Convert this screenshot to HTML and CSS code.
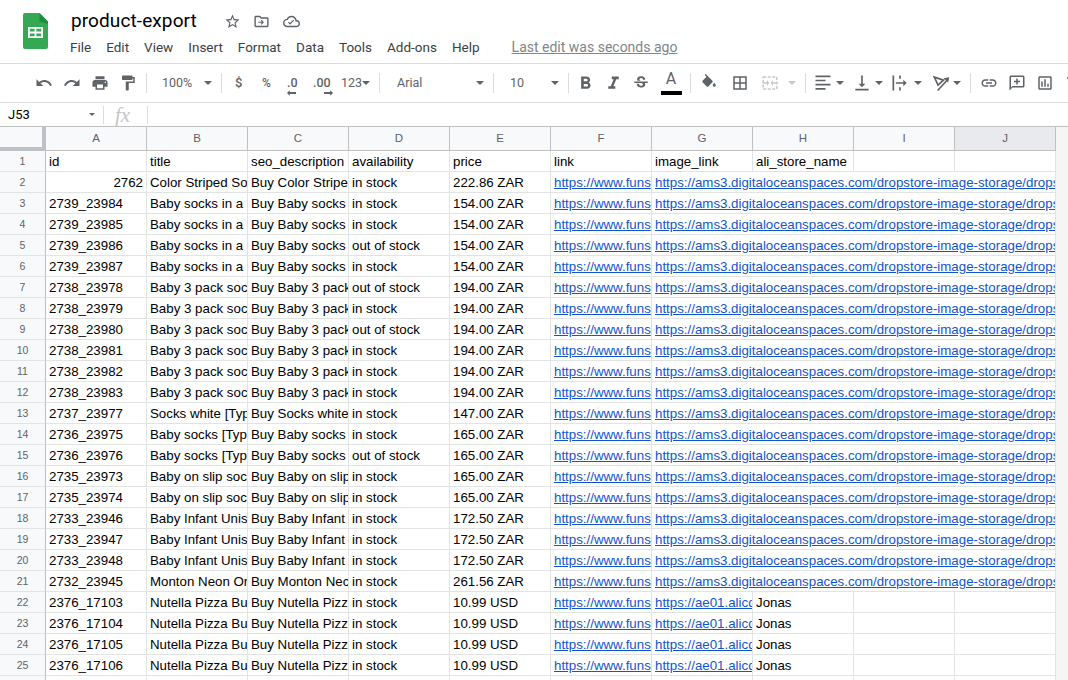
FILE: index.html
```html
<!DOCTYPE html>
<html lang="en">
<head>
<meta charset="utf-8">
<title>product-export</title>
<link rel="stylesheet" href="styles.css">
</head>
<body>
<header class="top">
  <svg class="logo" viewBox="0 0 25 36"><path fill="#34a853" d="M2 0h14.500L25 8.500V34a2 2 0 0 1-2 2H2a2 2 0 0 1-2-2V2a2 2 0 0 1 2-2z"/><path fill="#188038" d="M16.500 0L25 8.500V11l-8.500-2.500z" opacity=".7"/><path fill="#fff" d="M5 14h15v11H5zm1.800 1.800v2.800h4.800v-2.800zm6.600 0v2.800h4.800v-2.800zM6.800 20.400v2.800h4.800v-2.800zm6.600 0v2.800h4.800v-2.800z" fill-rule="evenodd"/></svg>
  <div class="titles">
    <div class="titleline">
      <span class="doc">product-export</span>
      <svg class="hi star" viewBox="0 0 24 24"><path d="M22 9.240l-7.190-.62L12 2 9.190 8.630 2 9.240l5.460 4.730L5.820 21 12 17.270 18.180 21l-1.630-7.030L22 9.240zM12 15.400l-3.760 2.270 1-4.280-3.320-2.880 4.380-.38L12 6.100l1.710 4.040 4.380.38-3.320 2.880 1 4.280L12 15.400z"/></svg>
      <svg class="hi" viewBox="0 0 24 24"><path d="M20 6h-8l-2-2H4c-1.100 0-2 .9-2 2v12c0 1.100.9 2 2 2h16c1.100 0 2-.9 2-2V8c0-1.100-.9-2-2-2zm0 12H4V6h5.200l2 2H20v10zM12 9.500l-1.100 1.100 1.600 1.600H7.500v1.600h5l-1.600 1.600 1.100 1.100 3.500-3.500z"/></svg>
      <svg class="hi" viewBox="0 0 24 24"><path d="M19.350 10.040C18.670 6.590 15.640 4 12 4 9.110 4 6.600 5.640 5.350 8.040 2.340 8.360 0 10.910 0 14c0 3.310 2.690 6 6 6h13c2.760 0 5-2.240 5-5 0-2.640-2.050-4.780-4.650-4.960zM19 18H6c-2.210 0-4-1.790-4-4s1.790-4 4-4h.71C7.370 7.690 9.480 6 12 6c3.040 0 5.500 2.460 5.500 5.500v.5H19c1.660 0 3 1.340 3 3s-1.340 3-3 3zm-9-1.500l-3-3 1.200-1.200 1.800 1.800 4.600-4.600 1.200 1.200z"/></svg>
    </div>
    <nav class="menu">
      <span>File</span><span>Edit</span><span>View</span><span>Insert</span><span>Format</span><span>Data</span><span>Tools</span><span>Add-ons</span><span>Help</span>
      <span class="last">Last edit was seconds ago</span>
    </nav>
  </div>
</header>

<div class="toolbar">
  <span class="tb"><svg class="ic" viewBox="0 0 24 24"><path d="M12.500 8c-2.650 0-5.050.99-6.900 2.600L2 7v9h9l-3.620-3.620c1.390-1.160 3.160-1.880 5.120-1.880 3.540 0 6.550 2.310 7.600 5.500l2.370-.78C21.080 11.030 17.150 8 12.500 8z"/></svg></span>
  <span class="tb"><svg class="ic" viewBox="0 0 24 24"><path d="M18.400 10.600C16.550 8.990 14.150 8 11.500 8c-4.650 0-8.580 3.030-9.960 7.220L3.900 16c1.050-3.190 4.050-5.500 7.600-5.500 1.950 0 3.730.72 5.120 1.880L13 16h9V7l-3.600 3.600z"/></svg></span>
  <span class="tb"><svg class="ic" viewBox="0 0 24 24"><path d="M19 8H5c-1.660 0-3 1.340-3 3v6h4v4h12v-4h4v-6c0-1.660-1.340-3-3-3zm-3 11H8v-5h8v5zm3-7c-.55 0-1-.45-1-1s.45-1 1-1 1 .45 1 1-.45 1-1 1zm-1-9H6v4h12V3z"/></svg></span>
  <span class="tb"><svg class="ic" viewBox="0 0 24 24"><path d="M18 4V3c0-.55-.45-1-1-1H5c-.55 0-1 .45-1 1v4c0 .55.45 1 1 1h12c.55 0 1-.45 1-1V6h1v4H9v11c0 .55.45 1 1 1h2c.55 0 1-.45 1-1v-9h8V4h-3z"/></svg></span>
  <i class="sep s1"></i>
  <span class="tt zoom">100%</span><i class="caret c-zoom"></i>
  <i class="sep s9"></i>
  <span class="tt dollar">$</span>
  <span class="tt pct">%</span>
  <span class="tt dec dec0">.0<svg class="arr" viewBox="0 0 10 6"><path d="M0 3l3-3v2h7v2H3v2z"/></svg></span>
  <span class="tt dec dec00">.00<svg class="arr" viewBox="0 0 10 6"><path d="M10 3L7 0v2H0v2h7v2z"/></svg></span>
  <span class="tt n123">123</span><i class="caret c-123"></i>
  <i class="sep s9"></i>
  <span class="tt font">Arial</span><i class="caret"></i>
  <i class="sep s9"></i>
  <span class="tt size">10</span><i class="caret"></i>
  <i class="sep s9"></i>
  <span class="tb big m2"><svg class="ic" viewBox="0 0 24 24"><path d="M15.600 10.790c.97-.67 1.650-1.770 1.650-2.790 0-2.260-1.750-4-4-4H7v14h7.040c2.090 0 3.710-1.700 3.710-3.790 0-1.520-.86-2.820-2.150-3.420zM10 6.500h3c.83 0 1.500.67 1.500 1.500s-.67 1.500-1.500 1.500h-3v-3zm3.500 9H10v-3h3.500c.83 0 1.500.67 1.500 1.500s-.67 1.500-1.500 1.500z"/></svg></span>
  <span class="tb big"><svg class="ic" viewBox="0 0 24 24"><path d="M10 4v3h2.210l-3.420 8H6v3h8v-3h-2.210l3.420-8H18V4z"/></svg></span>
  <span class="tb"><svg class="ic" viewBox="0 0 24 24"><path d="M7.240 8.750c-.26-.48-.39-1.030-.39-1.670 0-.61.13-1.160.4-1.670.26-.5.63-.93 1.110-1.290.48-.35 1.050-.63 1.700-.83.66-.19 1.390-.29 2.180-.29.81 0 1.540.11 2.210.34.66.22 1.230.54 1.690.94.47.4.83.88 1.080 1.430.25.55.38 1.150.38 1.810h-3.010c0-.31-.05-.59-.15-.85-.09-.27-.24-.49-.44-.68-.2-.19-.45-.33-.75-.44-.3-.1-.66-.16-1.060-.16-.39 0-.74.04-1.030.13-.29.09-.53.21-.72.36-.19.16-.34.34-.44.55-.1.21-.15.43-.15.66 0 .48.25.88.74 1.210.38.25.77.48 1.410.7H7.390c-.05-.08-.11-.17-.15-.25zM21 12v-2H3v2h9.620c.18.07.4.14.55.2.37.17.66.34.87.51.21.17.35.36.43.57.07.2.11.43.11.69 0 .23-.05.45-.14.66-.09.2-.23.38-.42.53-.19.15-.42.26-.71.35-.29.08-.63.13-1.010.13-.43 0-.83-.04-1.180-.13s-.66-.23-.91-.42c-.25-.19-.45-.44-.59-.75-.14-.31-.25-.76-.25-1.210H6.400c0 .55.08 1.130.24 1.580.16.45.37.85.65 1.210.28.35.6.66.98.92.37.26.78.48 1.220.65.44.17.9.3 1.380.39.48.08.96.13 1.440.13.8 0 1.530-.09 2.180-.28s1.210-.45 1.670-.79c.46-.34.82-.77 1.070-1.270s.38-1.070.38-1.710c0-.6-.1-1.140-.31-1.610-.05-.11-.11-.23-.17-.33H21z"/></svg></span>
  <span class="tb color m2"><span class="a">A</span><i class="bar"></i></span>
  <i class="sep s5"></i>
  <span class="tb m4"><svg class="ic" viewBox="0 0 24 24"><path d="M16.560 8.940L7.620 0 6.210 1.410l2.380 2.380-5.150 5.150c-.59.59-.59 1.540 0 2.120l5.500 5.500c.29.29.68.44 1.060.44s.77-.15 1.060-.44l5.500-5.500c.59-.58.59-1.530 0-2.120zM19 11.500s-2 2.170-2 3.500c0 1.100.9 2 2 2s2-.9 2-2c0-1.330-2-3.500-2-3.500z"/></svg></span>
  <span class="tb m3"><svg class="ic" viewBox="0 0 24 24"><path d="M3 3v18h18V3H3zm8 16H5v-6h6v6zm0-8H5V5h6v6zm8 8h-6v-6h6v6zm0-8h-6V5h6v6z"/></svg></span>
  <span class="tb m2 off"><svg class="ic" viewBox="0 0 24 24"><rect class="dash" x="3" y="4" width="18" height="16"/><path d="M2 11h6V8l3 4-3 4v-3H2zM22 11h-6V8l-3 4 3 4v-3h6z"/></svg></span>
  <i class="caret off m4"></i>
  <i class="sep s9"></i>
  <span class="tb nar m6"><svg class="ic" viewBox="0 0 24 24"><path d="M3 3h18v2H3zM3 8h12v2H3zM3 13h18v2H3zM3 18h12v2H3z"/></svg></span><i class="caret m2"></i>
  <span class="tb nar m7"><svg class="ic" viewBox="0 0 24 24"><path d="M16 13h-3V3h-2v10H8l4 4 4-4zM4 19v2h16v-2H4z"/></svg></span><i class="caret m2"></i>
  <span class="tb nar m6"><svg class="ic" viewBox="0 0 24 24"><path d="M3 3h2v18H3zM11 3h2v4h-2zM11 17h2v4h-2zM7 11h9V8l4 4-4 4v-3H7z"/></svg></span><i class="caret m3"></i>
  <span class="tb nar m8"><svg class="ic" viewBox="0 0 24 24"><path class="st" d="M4 5l11 3.500-6.500 6z"/><path class="st" d="M8 21L19 9"/><path d="M22 5l-7 1.200 5.600 5.200z"/></svg></span><i class="caret m1"></i>
  <i class="sep s9"></i>
  <span class="tb m4"><svg class="ic" viewBox="0 0 24 24"><path d="M3.900 12c0-1.710 1.390-3.100 3.100-3.100h4V7H7c-2.760 0-5 2.240-5 5s2.240 5 5 5h4v-1.900H7c-1.710 0-3.100-1.390-3.100-3.100zM8 13h8v-2H8v2zm9-6h-4v1.900h4c1.710 0 3.100 1.390 3.100 3.100s-1.390 3.100-3.100 3.100h-4V17h4c2.760 0 5-2.240 5-5s-2.240-5-5-5z"/></svg></span>
  <span class="tb"><svg class="ic" viewBox="0 0 24 24"><path d="M20 2H4c-1.100 0-2 .9-2 2v18l4-4h14c1.100 0 2-.9 2-2V4c0-1.100-.9-2-2-2zm0 14H6l-2 2V4h16v12zM11 6h2v3h3v2h-3v3h-2v-3H8V9h3z"/></svg></span>
  <span class="tb"><svg class="ic" viewBox="0 0 24 24"><path d="M19 3H5c-1.100 0-2 .9-2 2v14c0 1.100.9 2 2 2h14c1.100 0 2-.9 2-2V5c0-1.100-.9-2-2-2zm0 16H5V5h14v14zM7 10h2v7H7zm4-3h2v10h-2zm4 6h2v4h-2z"/></svg></span>
  <span class="tb"><svg class="ic" viewBox="0 0 24 24"><path d="M4.250 5.610C6.270 8.200 10 13 10 13v6c0 .55.45 1 1 1h2c.55 0 1-.45 1-1v-6s3.720-4.800 5.740-7.390C20.250 4.950 19.780 4 18.950 4H5.040c-.83 0-1.300.95-.79 1.610z"/></svg></span>
</div>

<div class="fbar">
  <span class="ref">J53</span><i class="caret c-ref"></i>
  <i class="fsep"></i>
  <span class="fx">fx</span>
  <i class="fsep"></i>
</div>

<main class="sheet">
  <div class="row head">
    <span class="corner"></span><span>A</span><span>B</span><span>C</span><span>D</span><span>E</span><span>F</span><span>G</span><span>H</span><span>I</span><span class="sel">J</span>
  </div>
  <div class="row"><span class="n">1</span><span class="c">id</span><span class="c">title</span><span class="c">seo_description</span><span class="c">availability</span><span class="c">price</span><span class="c">link</span><span class="c">image_link</span><span class="c">ali_store_name</span><span class="c"></span><span class="c"></span></div>
  <div class="row"><span class="n">2</span><span class="c r">2762</span><span class="c">Color Striped So</span><span class="c">Buy Color Stripe</span><span class="c">in stock</span><span class="c">222.86 ZAR</span><span class="c u">https://www.funs</span><span class="c u w">https://ams3.digitaloceanspaces.com/dropstore-image-storage/dropstore</span></div>
  <div class="row"><span class="n">3</span><span class="c">2739_23984</span><span class="c">Baby socks in a</span><span class="c">Buy Baby socks</span><span class="c">in stock</span><span class="c">154.00 ZAR</span><span class="c u">https://www.funs</span><span class="c u w">https://ams3.digitaloceanspaces.com/dropstore-image-storage/dropstore</span></div>
  <div class="row"><span class="n">4</span><span class="c">2739_23985</span><span class="c">Baby socks in a</span><span class="c">Buy Baby socks</span><span class="c">in stock</span><span class="c">154.00 ZAR</span><span class="c u">https://www.funs</span><span class="c u w">https://ams3.digitaloceanspaces.com/dropstore-image-storage/dropstore</span></div>
  <div class="row"><span class="n">5</span><span class="c">2739_23986</span><span class="c">Baby socks in a</span><span class="c">Buy Baby socks</span><span class="c">out of stock</span><span class="c">154.00 ZAR</span><span class="c u">https://www.funs</span><span class="c u w">https://ams3.digitaloceanspaces.com/dropstore-image-storage/dropstore</span></div>
  <div class="row"><span class="n">6</span><span class="c">2739_23987</span><span class="c">Baby socks in a</span><span class="c">Buy Baby socks</span><span class="c">in stock</span><span class="c">154.00 ZAR</span><span class="c u">https://www.funs</span><span class="c u w">https://ams3.digitaloceanspaces.com/dropstore-image-storage/dropstore</span></div>
  <div class="row"><span class="n">7</span><span class="c">2738_23978</span><span class="c">Baby 3 pack soc</span><span class="c">Buy Baby 3 pack</span><span class="c">out of stock</span><span class="c">194.00 ZAR</span><span class="c u">https://www.funs</span><span class="c u w">https://ams3.digitaloceanspaces.com/dropstore-image-storage/dropstore</span></div>
  <div class="row"><span class="n">8</span><span class="c">2738_23979</span><span class="c">Baby 3 pack soc</span><span class="c">Buy Baby 3 pack</span><span class="c">in stock</span><span class="c">194.00 ZAR</span><span class="c u">https://www.funs</span><span class="c u w">https://ams3.digitaloceanspaces.com/dropstore-image-storage/dropstore</span></div>
  <div class="row"><span class="n">9</span><span class="c">2738_23980</span><span class="c">Baby 3 pack soc</span><span class="c">Buy Baby 3 pack</span><span class="c">out of stock</span><span class="c">194.00 ZAR</span><span class="c u">https://www.funs</span><span class="c u w">https://ams3.digitaloceanspaces.com/dropstore-image-storage/dropstore</span></div>
  <div class="row"><span class="n">10</span><span class="c">2738_23981</span><span class="c">Baby 3 pack soc</span><span class="c">Buy Baby 3 pack</span><span class="c">in stock</span><span class="c">194.00 ZAR</span><span class="c u">https://www.funs</span><span class="c u w">https://ams3.digitaloceanspaces.com/dropstore-image-storage/dropstore</span></div>
  <div class="row"><span class="n">11</span><span class="c">2738_23982</span><span class="c">Baby 3 pack soc</span><span class="c">Buy Baby 3 pack</span><span class="c">in stock</span><span class="c">194.00 ZAR</span><span class="c u">https://www.funs</span><span class="c u w">https://ams3.digitaloceanspaces.com/dropstore-image-storage/dropstore</span></div>
  <div class="row"><span class="n">12</span><span class="c">2738_23983</span><span class="c">Baby 3 pack soc</span><span class="c">Buy Baby 3 pack</span><span class="c">in stock</span><span class="c">194.00 ZAR</span><span class="c u">https://www.funs</span><span class="c u w">https://ams3.digitaloceanspaces.com/dropstore-image-storage/dropstore</span></div>
  <div class="row"><span class="n">13</span><span class="c">2737_23977</span><span class="c">Socks white [Typ</span><span class="c">Buy Socks white</span><span class="c">in stock</span><span class="c">147.00 ZAR</span><span class="c u">https://www.funs</span><span class="c u w">https://ams3.digitaloceanspaces.com/dropstore-image-storage/dropstore</span></div>
  <div class="row"><span class="n">14</span><span class="c">2736_23975</span><span class="c">Baby socks [Typ</span><span class="c">Buy Baby socks</span><span class="c">in stock</span><span class="c">165.00 ZAR</span><span class="c u">https://www.funs</span><span class="c u w">https://ams3.digitaloceanspaces.com/dropstore-image-storage/dropstore</span></div>
  <div class="row"><span class="n">15</span><span class="c">2736_23976</span><span class="c">Baby socks [Typ</span><span class="c">Buy Baby socks</span><span class="c">out of stock</span><span class="c">165.00 ZAR</span><span class="c u">https://www.funs</span><span class="c u w">https://ams3.digitaloceanspaces.com/dropstore-image-storage/dropstore</span></div>
  <div class="row"><span class="n">16</span><span class="c">2735_23973</span><span class="c">Baby on slip soc</span><span class="c">Buy Baby on slip</span><span class="c">in stock</span><span class="c">165.00 ZAR</span><span class="c u">https://www.funs</span><span class="c u w">https://ams3.digitaloceanspaces.com/dropstore-image-storage/dropstore</span></div>
  <div class="row"><span class="n">17</span><span class="c">2735_23974</span><span class="c">Baby on slip soc</span><span class="c">Buy Baby on slip</span><span class="c">in stock</span><span class="c">165.00 ZAR</span><span class="c u">https://www.funs</span><span class="c u w">https://ams3.digitaloceanspaces.com/dropstore-image-storage/dropstore</span></div>
  <div class="row"><span class="n">18</span><span class="c">2733_23946</span><span class="c">Baby Infant Unis</span><span class="c">Buy Baby Infant</span><span class="c">in stock</span><span class="c">172.50 ZAR</span><span class="c u">https://www.funs</span><span class="c u w">https://ams3.digitaloceanspaces.com/dropstore-image-storage/dropstore</span></div>
  <div class="row"><span class="n">19</span><span class="c">2733_23947</span><span class="c">Baby Infant Unis</span><span class="c">Buy Baby Infant</span><span class="c">in stock</span><span class="c">172.50 ZAR</span><span class="c u">https://www.funs</span><span class="c u w">https://ams3.digitaloceanspaces.com/dropstore-image-storage/dropstore</span></div>
  <div class="row"><span class="n">20</span><span class="c">2733_23948</span><span class="c">Baby Infant Unis</span><span class="c">Buy Baby Infant</span><span class="c">in stock</span><span class="c">172.50 ZAR</span><span class="c u">https://www.funs</span><span class="c u w">https://ams3.digitaloceanspaces.com/dropstore-image-storage/dropstore</span></div>
  <div class="row"><span class="n">21</span><span class="c">2732_23945</span><span class="c">Monton Neon Or</span><span class="c">Buy Monton Nec</span><span class="c">in stock</span><span class="c">261.56 ZAR</span><span class="c u">https://www.funs</span><span class="c u w">https://ams3.digitaloceanspaces.com/dropstore-image-storage/dropstore</span></div>
  <div class="row"><span class="n">22</span><span class="c">2376_17103</span><span class="c">Nutella Pizza Bu</span><span class="c">Buy Nutella Pizz</span><span class="c">in stock</span><span class="c">10.99 USD</span><span class="c u">https://www.funs</span><span class="c u">https://ae01.alicdn</span><span class="c">Jonas</span><span class="c"></span><span class="c"></span></div>
  <div class="row"><span class="n">23</span><span class="c">2376_17104</span><span class="c">Nutella Pizza Bu</span><span class="c">Buy Nutella Pizz</span><span class="c">in stock</span><span class="c">10.99 USD</span><span class="c u">https://www.funs</span><span class="c u">https://ae01.alicdn</span><span class="c">Jonas</span><span class="c"></span><span class="c"></span></div>
  <div class="row"><span class="n">24</span><span class="c">2376_17105</span><span class="c">Nutella Pizza Bu</span><span class="c">Buy Nutella Pizz</span><span class="c">in stock</span><span class="c">10.99 USD</span><span class="c u">https://www.funs</span><span class="c u">https://ae01.alicdn</span><span class="c">Jonas</span><span class="c"></span><span class="c"></span></div>
  <div class="row"><span class="n">25</span><span class="c">2376_17106</span><span class="c">Nutella Pizza Bu</span><span class="c">Buy Nutella Pizz</span><span class="c">in stock</span><span class="c">10.99 USD</span><span class="c u">https://www.funs</span><span class="c u">https://ae01.alicdn</span><span class="c">Jonas</span><span class="c"></span><span class="c"></span></div>
  <div class="row"><span class="n"></span><span class="c"></span><span class="c"></span><span class="c"></span><span class="c"></span><span class="c"></span><span class="c"></span><span class="c"></span><span class="c"></span><span class="c"></span><span class="c"></span></div>
</main>
</body>
</html>
```
FILE: styles.css
```css
* { box-sizing: border-box; }
html, body { margin: 0; padding: 0; height: 680px; overflow: hidden; background: #fff; }
body { font-family: "Liberation Sans", Arial, sans-serif; color: #000; }

/* title area */
.top { height: 64px; display: flex; border-bottom: 1px solid #dadce0; padding: 13px 0 0 23px; }
.logo { width: 25px; height: 36px; flex: none; }
.titles { margin: -4px 0 0 23px; display: flex; flex-direction: column; }
.titleline { display: flex; align-items: center; height: 24px; }
.doc { font: 19px/24px Roboto, sans-serif; color: #000; letter-spacing: .1px; width: 152.5px; flex: none; }
.hi { width: 17px; height: 17px; fill: #5f6368; margin-right: 12.7px; flex: none; }
.menu { display: flex; gap: 15px; margin: 4px 0 0 -1px; font: 13.5px/20px Roboto, sans-serif; color: #3c4043; }
.last { color: #80868b; text-decoration: underline; margin-left: 17px; font-size: 14px; }

/* toolbar */
.toolbar { height: 39px; display: flex; align-items: center; padding-left: 30px; border-bottom: 1px solid #dadce0; white-space: nowrap; overflow: hidden; }
.tb { width: 28px; height: 28px; flex: none; display: flex; align-items: center; justify-content: center; position: relative; }
.tb.nar { width: 22px; }
.ic { width: 18px; height: 18px; fill: #5f6368; display: block; overflow: visible; }
.nar .ic { width: 20px; height: 20px; }
.big .ic { width: 21px; height: 21px; }
.st { fill: none; stroke: #5f6368; stroke-width: 2; }
.dash { fill: none; stroke: #c8c9cb; stroke-width: 2; stroke-dasharray: 4 2; }
.off .ic { fill: #c8c9cb; }
.sep { width: 1px; height: 20px; background: #dadce0; flex: none; }
.tt { font: 12.5px/28px Roboto, sans-serif; color: #5f6368; flex: none; }
.caret { width: 0; height: 0; border: 4px solid transparent; border-top: 4px solid #5f6368; border-bottom: 0; flex: none; }
.caret.off { border-top-color: #c8c9cb; }
.m1 { margin-left: 1px; }
.m2 { margin-left: 2px; }
.m3 { margin-left: 3px; }
.m4 { margin-left: 4px; }
.m6 { margin-left: 6px; }
.m7 { margin-left: 7px; }
.m8 { margin-left: 8px; }
.s1 { margin-left: 4px; }
.s5 { margin-left: 5px; }
.s9 { margin-left: 9px; }
.zoom { margin-left: 15px; width: 42px; }
.dollar { margin-left: 13px; font-weight: 500; font-size: 13px; width: 8px; }
.pct { margin-left: 19px; font-size: 12px; font-weight: 500; width: 10px; }
.dec { position: relative; font-weight: 500; font-size: 12.5px; }
.dec0 { margin-left: 15px; width: 10px; }
.dec00 { margin-left: 16px; width: 17px; }
.arr { position: absolute; width: 9px; height: 6px; left: 0; top: 21px; fill: #5f6368; }
.dec00 .arr { left: 11px; }
.n123 { margin-left: 11px; width: 21px; }
.c-123 { margin-left: 0; }
.font { margin-left: 17px; width: 79px; }
.size { margin-left: 16px; width: 41px; }
.a { font: 400 16px/18px Roboto, sans-serif; color: #5f6368; margin-top: -8px; }
.bar { position: absolute; left: 4px; bottom: 2px; width: 21px; height: 4px; background: #000; }

/* formula bar */
.fbar { height: 24px; display: flex; align-items: center; border-bottom: 1px solid #c0c0c0; }
.ref { font: 13px/20px Roboto, sans-serif; color: #000; margin-left: 8px; width: 81px; flex: none; }
.c-ref { border-width: 3px; border-bottom: 0; margin-right: 8px; }
.fsep { width: 1px; height: 18px; background: #dadce0; flex: none; }
.fx { font: italic 21px/22px "Liberation Serif", serif; color: #c4c6c9; width: 43px; padding-left: 11px; flex: none; }

/* sheet */
.sheet { background: #f5f5f5; height: 553px; overflow: hidden; }
.row { display: grid; grid-template-columns: 46px repeat(10, 101px); width: 1056px; height: 21px; font-size: 13.3px; line-height: 22px; background: #fff; }
.head { height: 24px; font-size: 11.5px; line-height: 23px; color: #5f6368; text-align: center; background: #f8f9fa; }
.head span { border-right: 1px solid #c0c0c0; border-bottom: 1px solid #c0c0c0; }
.head .corner { border-right: 4px solid #bdc1c6; border-bottom: 4px solid #bdc1c6; }
.head .sel { background: #e8eaed; }
.n { background: #f8f9fa; color: #5f6368; font-size: 10.5px; line-height: 20px; text-align: center; border-right: 1px solid #c0c0c0; border-bottom: 1px solid #e2e3e3; }
.c { padding-left: 3px; padding-right: 3px; white-space: nowrap; overflow: hidden; border-right: 1px solid #e2e3e3; border-bottom: 1px solid #e2e3e3; }
.r { text-align: right; }
.u { color: #1155cc; text-decoration: underline; padding-right: 0; }
.w { grid-column: span 4; }
```
